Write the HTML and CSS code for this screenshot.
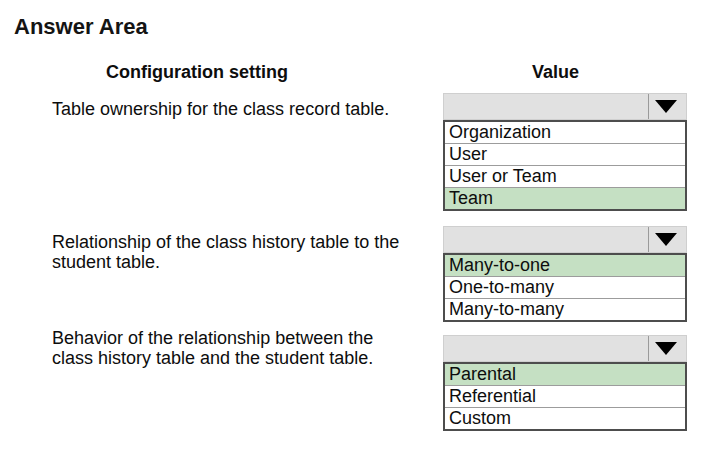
FILE: index.html
```html
<!DOCTYPE html>
<html lang="en">
<head>
    <meta charset="UTF-8">
    <meta name="viewport" content="width=device-width, initial-scale=1.0">
    <title>Answer Area</title>
    <link rel="stylesheet" href="styles.css">
</head>
<body>

    <div class="page">
        <h1>Answer Area</h1>

        <div class="sheet">
            <div class="row head-row">
                <div class="head-setting">Configuration setting</div>
                <div class="head-value">Value</div>
            </div>

            <div class="row">
                <p class="setting">Table ownership for the class record table.</p>
                <div class="dropdown">
                    <div class="select-bar">
                        <span class="select-field"></span>
                        <span class="select-arrow"><span class="triangle"></span></span>
                    </div>
                    <ul class="options">
                        <li>Organization</li>
                        <li>User</li>
                        <li>User or Team</li>
                        <li class="selected">Team</li>
                    </ul>
                </div>
            </div>

            <div class="row">
                <p class="setting">Relationship of the class history table to the<br>student table.</p>
                <div class="dropdown">
                    <div class="select-bar">
                        <span class="select-field"></span>
                        <span class="select-arrow"><span class="triangle"></span></span>
                    </div>
                    <ul class="options">
                        <li class="selected">Many-to-one</li>
                        <li>One-to-many</li>
                        <li>Many-to-many</li>
                    </ul>
                </div>
            </div>

            <div class="row row-last">
                <p class="setting">Behavior of the relationship between the<br>class history table and the student table.</p>
                <div class="dropdown">
                    <div class="select-bar">
                        <span class="select-field"></span>
                        <span class="select-arrow"><span class="triangle"></span></span>
                    </div>
                    <ul class="options">
                        <li class="selected">Parental</li>
                        <li>Referential</li>
                        <li>Custom</li>
                    </ul>
                </div>
            </div>
        </div>
    </div>

</body>
</html>
```

FILE: styles.css
```css
body {
    margin: 0;
    background-color: #ffffff;
    color: #0d0d0d;
    font-family: "Liberation Sans", Arial, sans-serif;
}

.page {
    padding: 14px 0 0 14px;
}

h1 {
    margin: 0;
    font-size: 22px;
    line-height: 25px;
    font-weight: bold;
    color: #141414;
}

.sheet {
    margin-left: 38px;
}

.row {
    display: grid;
    grid-template-columns: 391px 244px;
    align-items: start;
    margin-top: 15px;
}

.head-row {
    margin-top: 23px;
    margin-bottom: -4px;
    font-size: 18px;
    line-height: 20px;
    font-weight: bold;
}

.head-setting {
    padding-left: 54px;
}

.head-value {
    padding-left: 89px;
}

.setting {
    margin: 0;
    padding-top: 6px;
    font-size: 18px;
    line-height: 20px;
}

.row-last {
    margin-top: 6px;
}

.row-last .setting {
    padding-top: 0;
}

.row-last .dropdown {
    margin-top: 7px;
}

/* closed select */
.select-bar {
    display: flex;
    height: 27px;
    box-sizing: border-box;
    border: 1px solid #cfcfcf;
    background-color: #e1e1e1;
}

.select-field {
    flex: 1;
}

.select-arrow {
    display: flex;
    align-items: center;
    justify-content: center;
    width: 37px;
    border-left: 1px solid #9a9a9a;
}

.triangle {
    width: 0;
    height: 0;
    margin-right: 4px;
    border-left: 11.5px solid transparent;
    border-right: 11.5px solid transparent;
    border-top: 13px solid #000000;
}

/* open option list */
.options {
    margin: 0;
    padding: 0;
    list-style-type: none;
    border: 2px solid #4d4d4d;
    font-size: 18px;
    line-height: 21px;
}

.options li {
    padding-left: 4px;
    border-top: 1px solid #9c9c9c;
}

.options li:first-child {
    border-top: none;
}

.options .selected {
    background-color: #c5e0c3;
}
```
